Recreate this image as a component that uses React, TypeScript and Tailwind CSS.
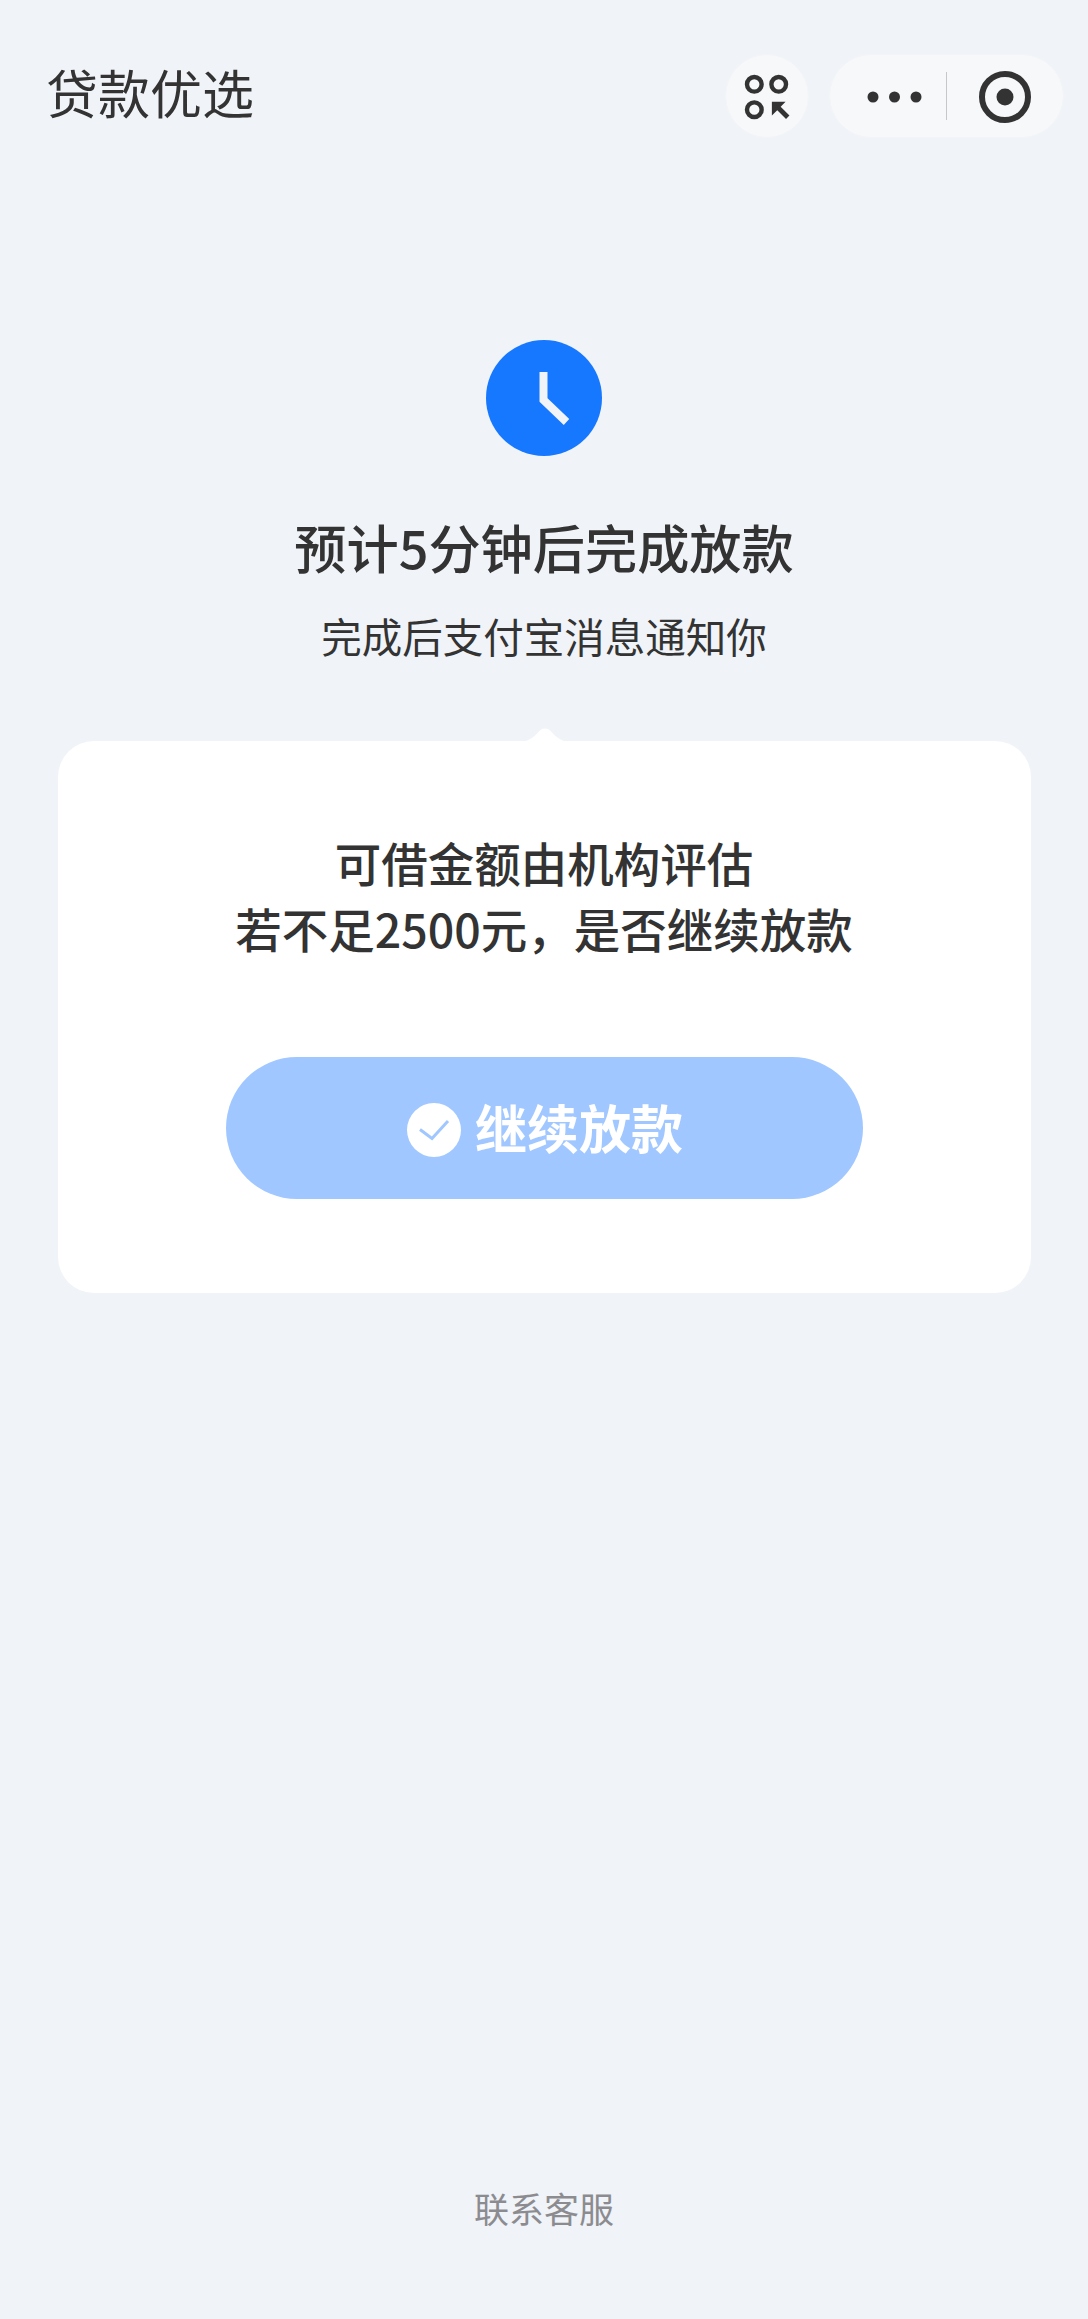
export default function App() {
  return (
    <div
      className="flex min-h-[2319px] w-full flex-col bg-[#f0f3f8] text-[#333333]"
      style={{ fontFamily: '"Noto Sans CJK SC", "Noto Sans", sans-serif' }}
    >
      <header className="flex items-center justify-between pl-[46px] pr-[24px] pt-[54px]">
        <h1 className="-mt-[9px] text-[52px] font-normal leading-[84px]">贷款优选</h1>
        <div className="flex gap-[20px]">
          <div className="flex h-[84px] w-[84px] items-center justify-center rounded-full border border-[#f3f4f7] bg-[#f7f8fa]">
            <svg width="84" height="84" viewBox="0 0 84 84" fill="none">
              <circle cx="29" cy="30" r="7.500" stroke="#333" strokeWidth="4.500" />
              <circle cx="54" cy="30" r="7.500" stroke="#333" strokeWidth="4.500" />
              <circle cx="29" cy="56" r="7.500" stroke="#333" strokeWidth="4.500" />
              <path d="M47 48h14l-5 5 9 9-3.500 3.500-9-9-5.500 5.500z" fill="#333" />
            </svg>
          </div>
          <div className="flex h-[84px] w-[235px] items-center rounded-full border border-[#f3f4f7] bg-[#f7f8fa]">
            <svg width="233" height="84" viewBox="0 0 233 84" fill="none">
              <circle cx="43" cy="43" r="5.500" fill="#333" />
              <circle cx="64.500" cy="43" r="5.500" fill="#333" />
              <circle cx="86" cy="43" r="5.500" fill="#333" />
              <path d="M116.500 18v48" stroke="#c6c7c9" strokeWidth="1" />
              <circle cx="175" cy="43" r="23" stroke="#333" strokeWidth="6" />
              <circle cx="175" cy="43" r="8.500" fill="#333" />
            </svg>
          </div>
        </div>
      </header>

      <main className="flex flex-1 flex-col items-center">
        <div className="mt-[202px] flex h-[116px] w-[116px] items-center justify-center rounded-full bg-[#1677ff]">
          <svg width="116" height="116" viewBox="0 0 116 116" fill="none">
            <path d="M57.500 32v28l23 22" stroke="#f0f3f8" strokeWidth="8" />
          </svg>
        </div>
        <h2 className="mt-[60px] text-[52.200px] font-medium leading-[60px]">预计5分钟后完成放款</h2>
        <p className="mt-[32px] text-[40.500px] leading-[56px]">完成后支付宝消息通知你</p>

        <section className="relative mt-[77px] flex w-[973px] flex-col items-center rounded-[36px] bg-white pb-[94px] pt-[88px]">
          <svg
            className="absolute left-[461px] top-[-13px]"
            width="52"
            height="14"
            viewBox="0 0 52 14"
            fill="none"
          >
            <path d="M0 14c8 0 14-4 20-10.500C23-.5 29-.5 32 3.500 38 10 44 14 52 14z" fill="#ffffff" />
          </svg>
          <p className="text-center text-[46.500px] font-medium leading-[66px]">
            可借金额由机构评估
            <br />
            若不足2500元，是否继续放款
          </p>
          <button className="mt-[96px] flex h-[142px] w-[637px] items-center justify-center gap-[14px] rounded-full bg-[#a0c7ff] pl-[2px] text-[52px] font-semibold text-white">
            <span className="mt-[4px] flex h-[54px] w-[54px] items-center justify-center rounded-full bg-white">
              <svg width="32" height="22" viewBox="0 0 32 22" fill="none">
                <path d="M2 10.500l12 9L30 2" stroke="#a0c7ff" strokeWidth="3" />
              </svg>
            </span>
            <span className="-mt-[2px]">继续放款</span>
          </button>
        </section>

        <a className="mt-auto pb-[86px] text-[35px] leading-[50px] text-[#8c8c90]">联系客服</a>
      </main>
    </div>
  );
}
